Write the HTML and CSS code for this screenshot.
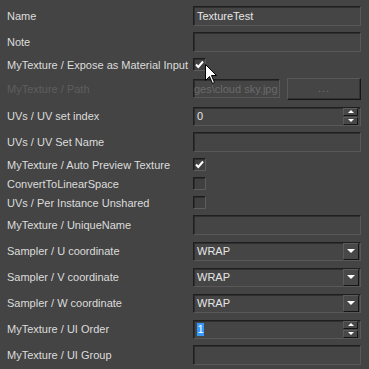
FILE: index.html
```html
<!DOCTYPE html>
<html>
<head>
<meta charset="utf-8">
<link rel="stylesheet" href="styles.css">
</head>
<body>
<div class="panel">
  <div class="row rf"><span class="lbl">Name</span><div class="field"><span class="txt">TextureTest</span></div></div>
  <div class="row rf"><span class="lbl">Note</span><div class="field"></div></div>
  <div class="row rc"><span class="lbl">MyTexture / Expose as Material Input</span>
    <div class="cb"><svg viewBox="0 0 11 11" width="11" height="11"><path d="M2 5.5 L4.3 8 L9 2.5" fill="none" stroke="#fff" stroke-width="2"/></svg></div></div>
  <div class="row rp"><span class="lbl dis">MyTexture / Path</span>
    <div class="pathctl"><div class="field pathfield"><span class="txt distxt">ges\cloud sky.jpg</span></div><div class="btn">...</div></div></div>
  <div class="row rf"><span class="lbl">UVs / UV set index</span>
    <div class="field spin"><span class="txt">0</span><div class="spinbtns"><div class="sb"><span class="up"></span></div><div class="sb"><span class="dn"></span></div></div></div></div>
  <div class="row rf"><span class="lbl">UVs / UV Set Name</span><div class="field"></div></div>
  <div class="row rc"><span class="lbl">MyTexture / Auto Preview Texture</span>
    <div class="cb"><svg viewBox="0 0 11 11" width="11" height="11"><path d="M2 5.5 L4.3 8 L9 2.5" fill="none" stroke="#fff" stroke-width="2"/></svg></div></div>
  <div class="row rc"><span class="lbl">ConvertToLinearSpace</span><div class="cb"></div></div>
  <div class="row rc"><span class="lbl">UVs / Per Instance Unshared</span><div class="cb"></div></div>
  <div class="row rf"><span class="lbl">MyTexture / UniqueName</span><div class="field"></div></div>
  <div class="row rf"><span class="lbl">Sampler / U coordinate</span>
    <div class="field drop"><span class="txt">WRAP</span><div class="dbtn"><span class="dn big"></span></div></div></div>
  <div class="row rf"><span class="lbl">Sampler / V coordinate</span>
    <div class="field drop"><span class="txt">WRAP</span><div class="dbtn"><span class="dn big"></span></div></div></div>
  <div class="row rf"><span class="lbl">Sampler / W coordinate</span>
    <div class="field drop"><span class="txt">WRAP</span><div class="dbtn"><span class="dn big"></span></div></div></div>
  <div class="row rf"><span class="lbl">MyTexture / UI Order</span>
    <div class="field spin"><span class="txt"><span class="sel">1</span></span><div class="spinbtns"><div class="sb"><span class="up"></span></div><div class="sb"><span class="dn"></span></div></div></div></div>
  <div class="row rf"><span class="lbl">MyTexture / UI Group</span><div class="field"></div></div>
  <svg class="cursor" width="13" height="21" viewBox="0 0 13 21"><path d="M0.5 0.5 L0.5 16.5 L4.5 12.5 L7.5 19.5 L9.5 18.5 L6.5 11.5 L11.5 11.5 Z" fill="#fff" stroke="#000" stroke-width="1"/></svg>
</div>
</body>
</html>
```
FILE: styles.css
```css
html, body {
  margin: 0;
  padding: 0;
  background: #444444;
  width: 369px;
  height: 369px;
  overflow: hidden;
}
.panel {
  position: relative;
  padding: 3px 8px 0 7px;
  font-family: "Liberation Sans", Arial, sans-serif;
  font-size: 11px;
  color: #dcdcdc;
}
.row {
  display: grid;
  grid-template-columns: 186px 168px;
  align-items: center;
}
.rf { height: 26px; }
.rc { height: 19px; }
.rp { height: 29px; }
.lbl { white-space: nowrap; }
.lbl.dis { color: #5e5e5e; }
.field {
  box-sizing: border-box;
  height: 20px;
  border: 1px solid;
  border-color: #1f1f1f #585858 #585858 #1f1f1f;
  box-shadow: inset 1px 1px 0 #2f2f2f;
  background: #454545;
  display: flex;
  align-items: center;
  position: relative;
  overflow: hidden;
}
.txt {
  padding-left: 3px;
  color: #e6e6e6;
  white-space: nowrap;
}
.distxt { color: #6a6a6a; text-indent: -3px; display: block; }
.cb {
  box-sizing: border-box;
  width: 13px;
  height: 13px;
  border: 1px solid;
  border-color: #1c1c1c #5c5c5c #5c5c5c #1c1c1c;
  box-shadow: inset 1px 1px 0 #2e2e2e;
  background: #404040;
  display: flex;
  align-items: center;
  justify-content: center;
}
.pathctl {
  display: flex;
  align-items: center;
  gap: 7px;
}
.pathfield { width: 87px; height: 19px; flex: none; }
.btn {
  box-sizing: border-box;
  flex: 1;
  height: 22px;
  border: 1px solid;
  border-color: #585858 #161616 #161616 #585858;
  box-shadow: inset -1px -1px 0 #333;
  background: #454545;
  color: #707070;
  text-align: center;
  line-height: 18px;
  letter-spacing: 1px;
}
.spin, .drop { height: 19px; }
.spinbtns {
  position: absolute;
  right: 2px;
  top: 0;
  bottom: 0;
  width: 15px;
  display: flex;
  flex-direction: column;
  justify-content: center;
  gap: 1px;
}
.sb {
  box-sizing: border-box;
  height: 8px;
  border: 1px solid;
  border-color: #5a5a5a #151515 #151515 #5a5a5a;
  background: #484848;
  display: flex;
  align-items: center;
  justify-content: center;
}
.up {
  width: 0; height: 0;
  border-left: 3px solid transparent;
  border-right: 3px solid transparent;
  border-bottom: 3px solid #ffffff;
}
.dn {
  width: 0; height: 0;
  border-left: 3px solid transparent;
  border-right: 3px solid transparent;
  border-top: 3px solid #ffffff;
}
.dn.big {
  border-left-width: 4px;
  border-right-width: 4px;
  border-top-width: 4px;
}
.dbtn {
  position: absolute;
  right: 1px;
  top: 0;
  bottom: 0;
  width: 16px;
  box-sizing: border-box;
  border: 1px solid;
  border-color: #5a5a5a #151515 #151515 #5a5a5a;
  background: #484848;
  display: flex;
  align-items: center;
  justify-content: center;
}
.sel {
  background: #3399ff;
  color: #ffffff;
  padding: 0 0.5px;
  display: inline-block;
  line-height: 13px;
}
.cursor {
  position: absolute;
  left: 205px;
  top: 64px;
}
```
